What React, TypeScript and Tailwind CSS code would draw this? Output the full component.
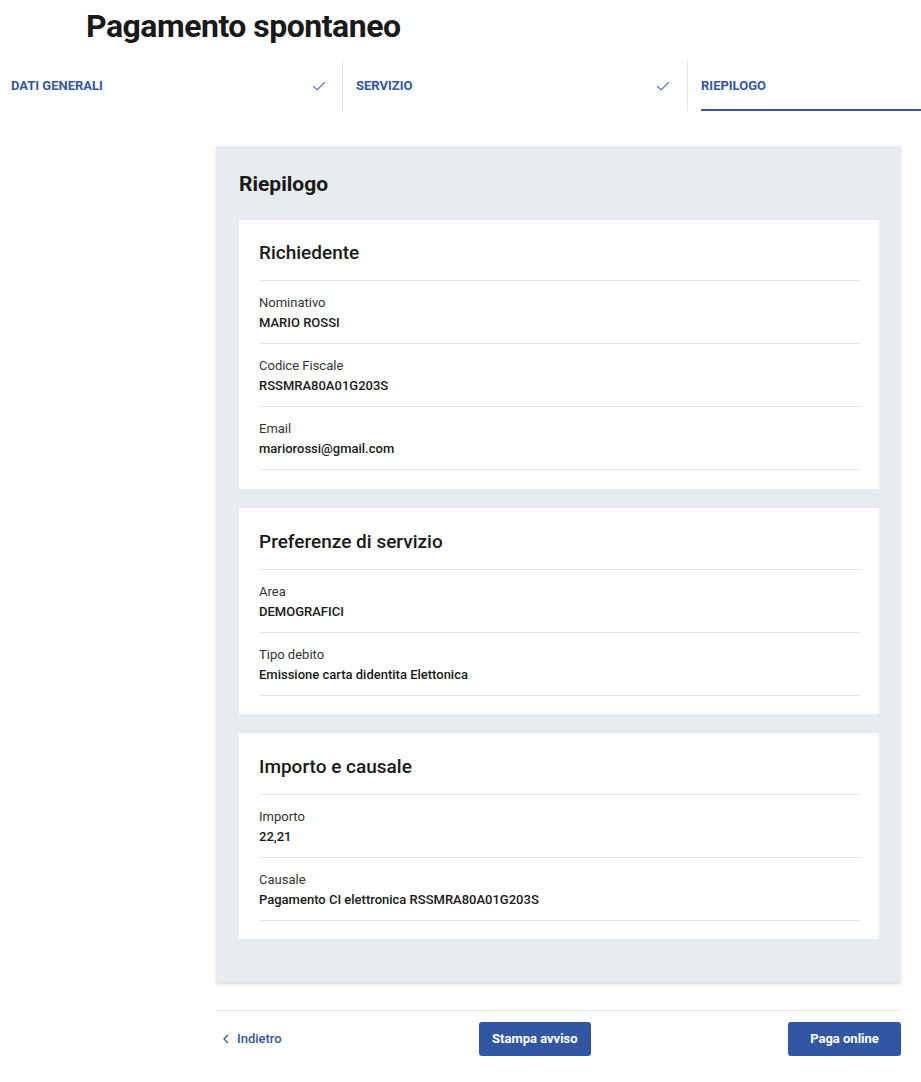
import React from 'react';

const steps = [
  { label: 'DATI GENERALI', done: true },
  { label: 'SERVIZIO', done: true },
  { label: 'RIEPILOGO', active: true },
];

const sections = [
  {
    title: 'Richiedente',
    rows: [
      { label: 'Nominativo', value: 'MARIO ROSSI' },
      { label: 'Codice Fiscale', value: 'RSSMRA80A01G203S' },
      { label: 'Email', value: 'mariorossi@gmail.com' },
    ],
  },
  {
    title: 'Preferenze di servizio',
    rows: [
      { label: 'Area', value: 'DEMOGRAFICI' },
      { label: 'Tipo debito', value: 'Emissione carta didentita Elettonica' },
    ],
  },
  {
    title: 'Importo e causale',
    rows: [
      { label: 'Importo', value: '22,21' },
      { label: 'Causale', value: 'Pagamento CI elettronica RSSMRA80A01G203S' },
    ],
  },
];

const Check = () => (
  <svg width="14" height="10" viewBox="0 0 14 10" fill="none">
    <path d="M1 5 L5 9 L13 1" stroke="#5a73ad" strokeWidth="1.2" />
  </svg>
);

const App = () => {
  return (
    <div className="w-[921px] overflow-hidden bg-white text-[#1a1a1a] font-['Roboto',sans-serif]">
      <h1 className="pl-[86px] pt-[6px] text-[32px] leading-[40px] font-bold tracking-[-0.5px] text-[#191919]">
        Pagamento spontaneo
      </h1>

      {/* stepper */}
      <div className="mt-[15px] flex w-[1035px]">
        {steps.map((s, i) => (
          <div
            key={i}
            className={`flex h-[50px] shrink-0 items-center ${i === 0 ? 'w-[343px] pl-[11px] pr-[16px]' : 'w-[345px] pl-[13px] pr-[17px]'} ${i < 2 ? 'border-r border-[#e3e4e6]' : ''}`}
          >
            <div
              className={`flex h-full flex-1 items-center justify-between ${s.active ? 'border-b-2 border-[#3356a2] pt-[2px]' : ''}`}
            >
              <span className="text-[13px] font-bold text-[#3356a2]">{s.label}</span>
              {s.done && <Check />}
            </div>
          </div>
        ))}
      </div>

      {/* riepilogo */}
      <div className="ml-[216px] mr-[20px] mt-[35px] rounded-[2px] bg-[#e8ebef] pl-[23px] pr-[22px] pb-[43px] pt-[24px] shadow-[0_2px_3px_rgba(0,0,0,0.15)]">
        <h2 className="text-[21px] leading-[28px] font-bold text-[#191919]">Riepilogo</h2>
        <div className="mt-[22px] flex flex-col gap-[19px]">
          {sections.map((sec, i) => (
            <div key={sec.title} className={`bg-white px-[20px] ${i === 0 ? 'pt-[20px] pb-[19px]' : 'pt-[21px] pb-[18px]'}`}>
              <h3 className="pb-[14px] text-[19px] leading-[26px] font-medium text-[#191919]">{sec.title}</h3>
              {sec.rows.map((r) => (
                <div key={r.label} className="border-t border-[#e2e3ea] pb-[11px] pt-[13px]">
                  <div className="text-[13px] leading-[18px] text-[#333333]">{r.label}</div>
                  <div className="mt-[2px] text-[13px] leading-[18px] font-medium text-[#191919]">{r.value}</div>
                </div>
              ))}
              <div className="border-t border-[#e2e3ea]" />
            </div>
          ))}
        </div>
      </div>

      {/* footer actions */}
      <div className="ml-[216px] mr-[20px] mt-[28px] flex items-center justify-between border-t border-[#e8e9eb] pb-[26px] pt-[11px]">
        <button className="flex items-center gap-[8px] pl-[7px] text-[13px] font-medium text-[#3356a2]">
          <svg width="6" height="10" viewBox="0 0 6 10" fill="none">
            <path d="M5 1 L1 5 L5 9" stroke="#3356a2" strokeWidth="1.2" />
          </svg>
          Indietro
        </button>
        <button className="h-[34px] w-[112px] rounded-[3px] bg-[#3356a2] text-[13px] font-bold text-white">
          Stampa avviso
        </button>
        <button className="h-[34px] w-[113px] rounded-[3px] bg-[#3356a2] text-[13px] font-bold text-white">
          Paga online
        </button>
      </div>
    </div>
  );
};

export default App;
